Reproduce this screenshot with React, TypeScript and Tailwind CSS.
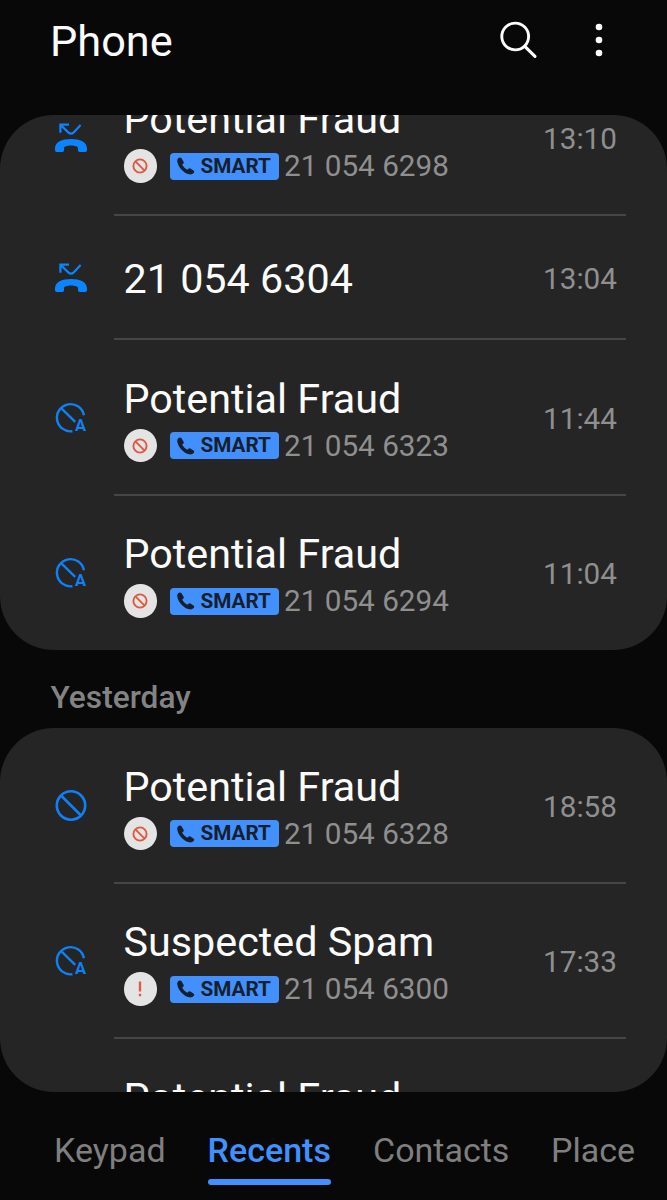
import React from 'react';
import clsx from 'clsx';

type CallKind = 'missed' | 'auto-blocked' | 'blocked';

interface Call {
    id: number;
    kind: CallKind;
    title: string;
    time?: string;
    number?: string;
    badge?: 'fraud' | 'spam';
}

const todayCalls: Call[] = [
    { id: 1, kind: 'missed', title: 'Potential Fraud', time: '13:10', number: '21 054 6298', badge: 'fraud' },
    { id: 2, kind: 'missed', title: '21 054 6304', time: '13:04' },
    { id: 3, kind: 'auto-blocked', title: 'Potential Fraud', time: '11:44', number: '21 054 6323', badge: 'fraud' },
    { id: 4, kind: 'auto-blocked', title: 'Potential Fraud', time: '11:04', number: '21 054 6294', badge: 'fraud' },
];

const yesterdayCalls: Call[] = [
    { id: 5, kind: 'blocked', title: 'Potential Fraud', time: '18:58', number: '21 054 6328', badge: 'fraud' },
    { id: 6, kind: 'auto-blocked', title: 'Suspected Spam', time: '17:33', number: '21 054 6300', badge: 'spam' },
];

const MissedIcon = () => (
    <svg width="34" height="32" viewBox="0 0 34 32" fill="none">
        <path
            d="M15 2.7H6.4V10.7M6.4 2.7L14.3 10.4Q17 13 19.7 10.4L26.6 3.1"
            stroke="#0a84ff"
            strokeWidth="2.2"
        />
        <path
            d="M1 26.5C1 20 8 17.1 17 17.1S33 20 33 26.5V28.3Q33 30 31.3 30H25.6Q24 30 24 28.3V26.2C24 24.5 21 23.6 17 23.6S10 24.5 10 26.2V28.3Q10 30 8.4 30H2.7Q1 30 1 28.3Z"
            fill="#0a84ff"
        />
    </svg>
);

const BlockedIcon = () => (
    <svg width="34" height="34" viewBox="0 0 34 34" fill="none" stroke="#0f80f5" strokeWidth="2.6">
        <circle cx="17" cy="16.5" r="14.2" />
        <path d="M7 6.5L27 26.5" />
    </svg>
);

const AutoBlockedIcon = () => (
    <svg width="34" height="34" viewBox="0 0 34 34" fill="none">
        <path d="M29.9 14.3A13.6 13.6 0 1 0 18.4 30.2" stroke="#0f80f5" strokeWidth="2.4" />
        <path d="M7.4 7.4L21.2 20.8" stroke="#0f80f5" strokeWidth="2.4" />
        <text x="21" y="29.6" fill="#0f80f5" fontSize="16.5" fontWeight="700" fontFamily="Roboto">
            A
        </text>
    </svg>
);

const kindIcons: Record<CallKind, React.ReactNode> = {
    missed: <MissedIcon />,
    blocked: <BlockedIcon />,
    'auto-blocked': <AutoBlockedIcon />,
};

const Badge = ({ type }: { type: 'fraud' | 'spam' }) => (
    <div className="flex size-[33.5px] shrink-0 items-center justify-center rounded-full bg-[#e4e4e4]">
        <svg width="16" height="16" viewBox="0 0 16 16" fill="none" stroke="#de5b43" strokeWidth="1.9">
            {type === 'fraud' ? (
                <>
                    <circle cx="8" cy="8" r="6.6" />
                    <path d="M3.4 3.4L12.6 12.6" />
                </>
            ) : (
                <path d="M8 .6V10.4M8 12.8V15.2" strokeWidth="2.4" />
            )}
        </svg>
    </div>
);

const SmartTag = () => (
    <div className="ml-[12.5px] flex h-[27px] w-[109px] shrink-0 items-center rounded bg-[#4190fd] pl-[7.5px] text-[#16202c]">
        <svg width="18" height="18" viewBox="0 0 18 18" fill="currentColor">
            <path d="M1 1.4C2 .4 3.8.3 4.5 1.2L6.6 4.7C7 5.5 6.8 6.2 6.2 6.7L5.2 7.5C6 9.7 8.1 11.8 10.5 12.8L11.4 11.8C12 11.2 12.7 11.1 13.4 11.5L16.5 13.5C17.4 14.1 17.4 15 16.8 15.8C15.6 17.2 14.1 17.7 12.3 17.3C6.5 15.8 1.6 10.8.4 4.9C.1 3.4.2 2.3 1 1.4Z" />
        </svg>
        <span className="ml-[5.5px] text-[20.7px] leading-none font-bold">SMART</span>
    </div>
);

const CallRow = ({ call, last }: { call: Call; last: boolean }) => {
    const { kind, title, time, number, badge } = call;

    return (
        <li className={clsx('flex shrink-0', badge ? 'h-[155.5px]' : 'h-[124px]')}>
            <div className="flex w-[114px] items-center pl-[54px]">{kindIcons[kind]}</div>
            <div
                className={clsx(
                    'mr-[41px] flex flex-1 items-center justify-between border-b-2 pt-[3.5px] pr-[9px] pl-[9.5px]',
                    last ? 'border-transparent' : 'border-[#464646]'
                )}
            >
                <div>
                    <h2 className="text-[41.3px] leading-[48px] whitespace-nowrap text-[#fcfcfc]">{title}</h2>
                    {badge && (
                        <div className="mt-[6px] flex h-[34px] items-center">
                            <Badge type={badge} />
                            <SmartTag />
                            <span className="ml-[5.5px] text-[29.7px] leading-[34px] whitespace-nowrap text-[#8f8f8f]">
                                {number}
                            </span>
                        </div>
                    )}
                </div>
                <time className="text-[29.7px] leading-[34px] text-[#8f8f8f]">{time}</time>
            </div>
        </li>
    );
};

interface CallListProps {
    calls: Call[];
    className: string;
    listClassName?: string;
    children?: React.ReactNode;
}

const CallList = ({ calls, className, listClassName, children }: CallListProps) => (
    <section className={clsx('shrink-0 overflow-hidden rounded-[54px] bg-[#252525]', className)}>
        <ul className={clsx('flex flex-col', listClassName)}>
            {calls.map((call, i) => (
                <CallRow key={call.id} call={call} last={!children && i === calls.length - 1} />
            ))}
            {children}
        </ul>
    </section>
);

const Header = () => (
    <header className="flex h-[115px] shrink-0 items-start justify-between pt-[17px] pr-[62px] pl-[50px]">
        <h1 className="text-[43.3px] leading-[50px] text-[#fcfcfc]">Phone</h1>
        <div className="flex items-center gap-[55px] pt-[3px]">
            <svg width="40" height="40" viewBox="0 0 40 40" fill="none" stroke="#fcfcfc">
                <circle cx="17.2" cy="16.5" r="13.4" strokeWidth="2.9" />
                <path d="M26.8 26.3L37 36.4" strokeWidth="3.1" strokeLinecap="round" />
            </svg>
            <svg width="12" height="40" viewBox="0 0 12 40" fill="#fcfcfc">
                <circle cx="6" cy="7" r="3.3" />
                <circle cx="6" cy="20" r="3.3" />
                <circle cx="6" cy="33" r="3.3" />
            </svg>
        </div>
    </header>
);

const TabBar = () => (
    <nav className="flex flex-1 items-start pt-[37px] pl-[54px] text-[34px] leading-[42px] text-[#7f7f7f]">
        <span className="w-[153.5px]">Keypad</span>
        <div className="flex w-[123.5px] flex-col items-center text-[#4190fd]">
            <span className="font-medium">Recents</span>
            <span className="mt-[8px] h-[5.5px] w-full rounded-full bg-[#4190fd]" />
        </div>
        <span className="ml-[42px] w-[178px]">Contacts</span>
        <span>Place</span>
    </nav>
);

export default function App() {
    return (
        <main className="flex h-[1200px] w-[667px] flex-col overflow-hidden bg-[#080808] font-['Roboto',sans-serif]">
            <Header />
            <CallList calls={todayCalls} className="h-[535px]" listClassName="-mt-[54.5px]" />
            <h3 className="flex h-[78px] shrink-0 items-center pt-[18px] pl-[50.5px] text-[31.7px] leading-9 font-medium text-[#838383]">
                Yesterday
            </h3>
            <CallList calls={yesterdayCalls} className="h-[364px]">
                {/* next entry, only its title peeks out above the tab bar */}
                <li className="pt-[34.5px] pl-[123.5px] text-[41.3px] leading-[48px] text-[#fcfcfc]">Potential Fraud</li>
            </CallList>
            <TabBar />
        </main>
    );
}
